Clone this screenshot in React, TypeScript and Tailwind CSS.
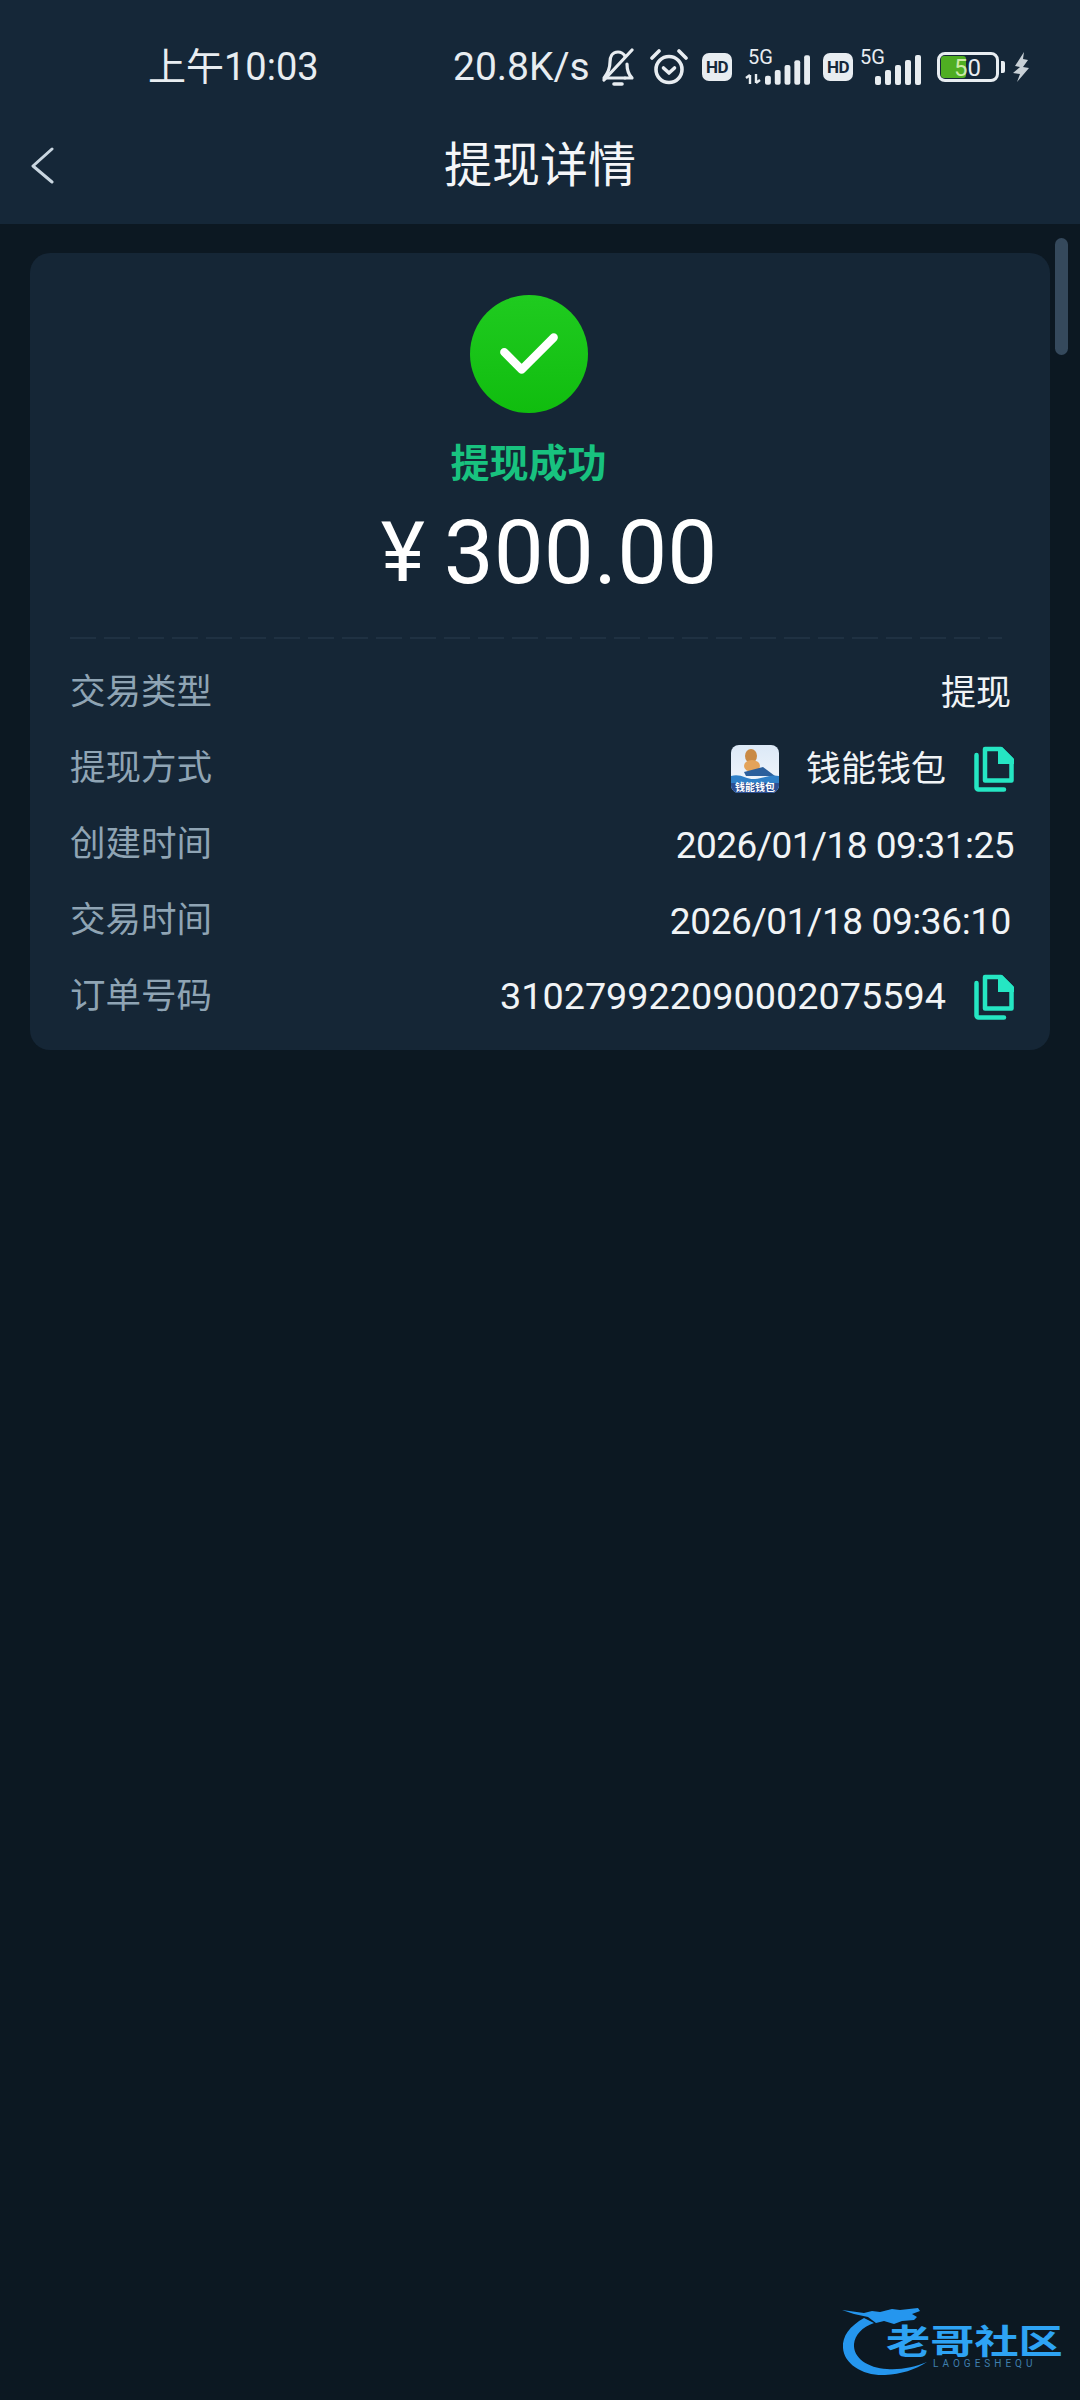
import React from 'react';

const sans = 'font-["Roboto","Noto_Sans_CJK_SC",sans-serif]';

const Signal: React.FC<{ className?: string }> = ({ className }) => (
  <svg viewBox="0 0 46 30" className={className} fill="#e8edf1">
    <rect x="0" y="21" width="6" height="9" rx="2" />
    <rect x="10" y="15" width="6" height="15" rx="2" />
    <rect x="20" y="10" width="6" height="20" rx="2" />
    <rect x="30" y="5" width="6" height="25" rx="2" />
    <rect x="40" y="0" width="6" height="30" rx="2" />
  </svg>
);

const HdBadge = () => (
  <div className={`flex h-[28px] w-[30px] items-center justify-center rounded-[7px] bg-[#e8edf1] text-[17px] font-bold leading-none tracking-[-0.5px] text-[#15283a] ${sans}`}>
    HD
  </div>
);

const CopyIcon = () => (
  <svg viewBox="0 0 40 46" className="h-[46px] w-[40px]" fill="none" stroke="#25e6c3" strokeWidth="4.5">
    <path d="M2.5 9v32.5a2 2 0 0 0 2 2H30" strokeLinecap="round" />
    <path d="M11 3h16l10.5 10.5V34.5H11z" strokeLinejoin="round" />
    <path d="M24 1h4l12 12v5H24z" fill="#25e6c3" stroke="none" />
  </svg>
);

const WalletLogo = () => (
  <svg viewBox="0 0 48 48" className="h-[48px] w-[48px] rounded-[8px]">
    <defs>
      <linearGradient id="wl" x1="0" y1="0" x2="0" y2="1">
        <stop offset="0" stopColor="#dce9f7" />
        <stop offset="1" stopColor="#f5f8fc" />
      </linearGradient>
    </defs>
    <rect width="48" height="48" fill="url(#wl)" />
    <ellipse cx="20" cy="11" rx="6" ry="7" fill="#c98a45" />
    <ellipse cx="21" cy="21" rx="8" ry="6" fill="#e3a35a" />
    <path d="M13 27 L32 22 L44 31 L15 31z" fill="#2b5f9c" />
    <path d="M0 31 C10 28 16 35 24 34 C34 33 40 29 48 31 V48 H0z" fill="#2f80c8" />
    <rect y="38" width="48" height="10" fill="#2c4f94" />
    <text x="24" y="46" textAnchor="middle" fontSize="10" fontWeight="700" fill="#fff" fontFamily="Noto Sans CJK SC, sans-serif">钱能钱包</text>
  </svg>
);

const Row: React.FC<{ label: string; children: React.ReactNode }> = ({ label, children }) => (
  <div className="flex h-[76px] items-center justify-between">
    <span className="text-[35.5px] leading-none text-[#8fa4b4]">{label}</span>
    <div className="flex items-center text-[37px] leading-none text-[#f1f4f6]">{children}</div>
  </div>
);

export default function App() {
  return (
    <div className={`relative h-[2400px] w-[1080px] overflow-hidden bg-[#0c1822] ${sans}`}>
      {/* header */}
      <header className="h-[224px] bg-[#152738]">
        <div className="flex h-[118px] items-center pt-[16px] pl-[148px] text-[#e8edf1]">
          <span className="w-[305px] text-[38px] leading-none">上午10:03</span>
          <span className="w-[141px] whitespace-nowrap text-[39px] leading-none">20.8K/s</span>
          <svg viewBox="0 0 34 38" className="ml-[7px] h-[38px] w-[34px]" fill="none" stroke="#e8edf1" strokeWidth="3.2" strokeLinecap="round" strokeLinejoin="round">
            <path d="M24 8c-2-3-4-4-7-4-6 0-8 5-8 10 0 7-2 11-6 16h21" />
            <path d="M26 16c0 6 1 10 5 14h-7" />
            <path d="M31 2 3 32" />
            <path d="M13 36h8" strokeWidth="3.6" />
          </svg>
          <svg viewBox="0 0 40 36" className="ml-[14px] h-[36px] w-[40px]" fill="none" stroke="#e8edf1" strokeWidth="3.6" strokeLinecap="round" strokeLinejoin="round">
            <ellipse cx="20" cy="20.5" rx="13" ry="13" />
            <path d="M3 9l7-7M37 9l-7-7" />
            <path d="M14.5 19l5.5 5 5.5-5" />
          </svg>
          <div className="ml-[13px]"><HdBadge /></div>
          <div className="ml-[13px] flex h-[36px] w-[65px] items-end">
            <div className="relative h-[36px] w-[20px]">
              <span className="absolute left-[3px] top-[-2px] text-[20px] leading-none">5G</span>
              <svg viewBox="0 0 16 10" className="absolute bottom-[1px] left-0 h-[10px] w-[16px]" stroke="#e8edf1" strokeWidth="2.4" fill="none">
                <path d="M5 1v9M1 4l4-3M11 9V0M15 6l-4 3" />
              </svg>
            </div>
            <Signal className="h-[30px] w-[45px]" />
          </div>
          <div className="ml-[13px]"><HdBadge /></div>
          <div className="ml-[7px] flex h-[36px] w-[62px] items-end">
            <div className="relative h-[36px] w-[14px]">
              <span className="absolute left-0 top-[-2px] text-[20px] leading-none">5G</span>
            </div>
            <Signal className="h-[30px] w-[48px]" />
          </div>
          <div className="relative ml-[15px] flex h-[30px] w-[62px] items-center rounded-[8px] border-[3px] border-[#e8edf1] p-[1px]">
            <div className="h-full w-[25px] rounded-[3px] bg-[#4fae22]" />
            <span className="absolute left-[14px] top-[1px] text-[24px] leading-none text-[#e8edf1]"><span className="text-[#cdeaa8]">5</span>0</span>
          </div>
          <div className="ml-[2px] h-[12px] w-[4px] rounded-r-[2px] bg-[#e8edf1]" />
          <svg viewBox="0 0 16 30" className="ml-[8px] h-[30px] w-[16px]" fill="#c8d0d6">
            <path d="M11 0 2 14l5 1-7 6 7 1-3 8 12-14-6-1 5-7-5-1z" />
          </svg>
        </div>
        <div className="relative flex h-[106px] items-center justify-center">
          <svg viewBox="0 0 24 37" className="absolute left-[30px] top-[29px] h-[37px] w-[24px]" fill="none" stroke="#c9d6e0" strokeWidth="3" strokeLinecap="round" strokeLinejoin="round">
            <path d="M22 2 3 19l19 16" />
          </svg>
          <h1 className="pb-[10px] text-[48px] font-normal leading-none text-[#f4f6f8]">提现详情</h1>
        </div>
      </header>

      {/* card */}
      <main className="px-[30px] pt-[29px]">
        <section className="rounded-[20px] bg-[#152636] pb-[15px] pl-[40px] pr-[36px] pt-[42px]">
          <div className="flex flex-col items-center pr-[27px]">
            <div className="flex h-[118px] w-[118px] items-center justify-center rounded-full bg-gradient-to-b from-[#1fcb1f] to-[#10bd0e]">
              <svg viewBox="0 0 64 48" className="h-[44px] w-[60px]" fill="none" stroke="#fff" strokeWidth="9" strokeLinecap="round" strokeLinejoin="round">
                <path d="M5 22l19 19L59 6" />
              </svg>
            </div>
            <div className="mt-[32px] text-[39px] font-bold leading-none text-[#18c27f]">提现成功</div>
          </div>
          <div className="mt-[24px] flex items-center justify-center gap-[19px] pl-[14px] text-white">
            <span className="text-[84px] leading-none">¥</span>
            <span className="text-[89px] leading-none">300.00</span>
          </div>
          <div className="mr-[12px] mt-[40px] h-[2px] bg-[repeating-linear-gradient(90deg,#1f3142_0,#1f3142_26px,transparent_26px,transparent_34px)]" />
          <div className="mt-[16px]">
            <Row label="交易类型"><span className="pr-[3px] text-[35px]">提现</span></Row>
            <Row label="提现方式">
              <WalletLogo />
              <span className="ml-[27px] text-[35px]">钱能钱包</span>
              <span className="ml-[28px]"><CopyIcon /></span>
            </Row>
            <Row label="创建时间"><span className="tracking-[-0.55px]">2026/01/18 09:31:25</span></Row>
            <Row label="交易时间"><span className="pr-[3px] tracking-[-0.4px]">2026/01/18 09:36:10</span></Row>
            <Row label="订单号码">
              <span className="text-[37.8px]">310279922090002075594</span>
              <span className="ml-[28px]"><CopyIcon /></span>
            </Row>
          </div>
        </section>
      </main>

      {/* scrollbar */}
      <div className="absolute left-[1055px] top-[238px] h-[117px] w-[13px] rounded-full bg-[#35495c]" />

      {/* watermark */}
      <div className="absolute left-[840px] top-[2304px] h-[76px] w-[230px]">
        <svg viewBox="0 0 110 76" className="absolute left-0 top-0 h-[76px] w-[110px]" fill="#2596ee">
          <path d="M24 14C10 22 2 32 3 44c1 16 20 28 42 27 16-1 30-5 42-13-12 5-26 8-40 7C28 64 13 54 14 40c1-9 8-17 20-21z" />
          <path d="M2 6l22 3 8-2 8 1 12-3 8 1 18-2 2 3-8 3 5 3-3 3-12 1-8 3-10-3-8 2-8-6-14-3z" />
        </svg>
        <div className="absolute left-[46px] top-[21px] origin-left scale-x-[1.3] whitespace-nowrap text-[34px] font-bold leading-none text-[#2ea3f4]">老哥社区</div>
        <div className="absolute left-[93px] top-[55px] whitespace-nowrap text-[10px] leading-none tracking-[4px] text-[#3f7fae]">LAOGESHEQU</div>
      </div>
    </div>
  );
}
